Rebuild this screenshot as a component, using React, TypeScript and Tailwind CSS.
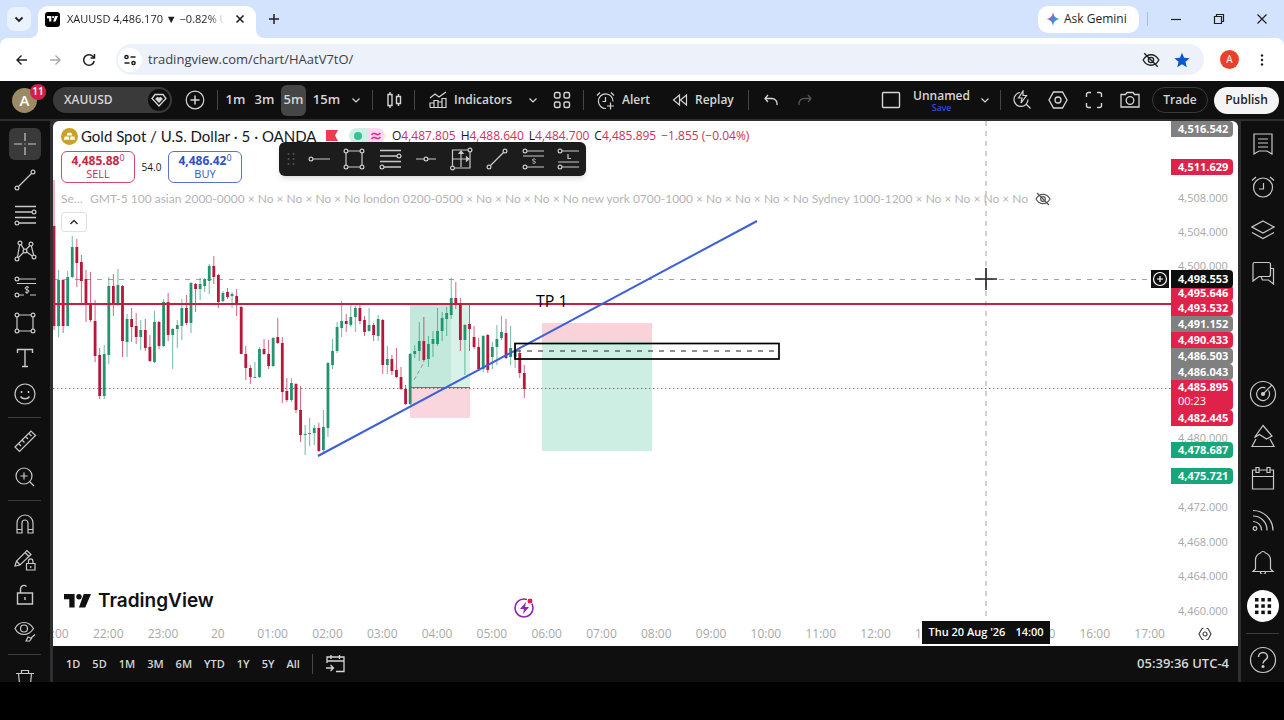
import type { ReactNode } from 'react'

// [high, body top, body bottom, low, 1 = up / 0 = down], one entry per 5m bar
const CANDLES = [
  [59, 105, 205, 209, 0], [149, 159, 205, 216, 1], [158, 159, 205, 212, 0], [150, 156, 205, 205, 1],
  [115, 126, 156, 157, 1], [118, 126, 142, 166, 0], [134, 141, 160, 184, 0], [149, 158, 183, 201, 0],
  [151, 183, 199, 201, 0], [179, 200, 235, 241, 0], [227, 234, 275, 278, 0], [224, 233, 275, 278, 1],
  [156, 165, 234, 243, 1], [153, 165, 183, 195, 0], [148, 164, 183, 185, 1], [164, 165, 220, 236, 0],
  [193, 198, 221, 236, 1], [187, 198, 206, 221, 0], [192, 205, 216, 223, 0], [199, 209, 216, 229, 1],
  [198, 209, 227, 230, 0], [214, 226, 240, 241, 0], [190, 201, 241, 242, 1], [200, 201, 225, 228, 0],
  [178, 181, 225, 226, 1], [172, 181, 214, 220, 0], [207, 208, 214, 248, 1], [199, 204, 208, 227, 1],
  [178, 187, 205, 219, 1], [174, 187, 202, 204, 0], [161, 162, 202, 212, 1], [162, 163, 168, 191, 0],
  [157, 163, 168, 179, 1], [157, 158, 165, 171, 1], [143, 145, 160, 173, 1], [135, 145, 156, 163, 0],
  [153, 154, 181, 187, 0], [170, 172, 180, 181, 1], [167, 171, 176, 178, 0], [171, 173, 175, 187, 1],
  [168, 175, 184, 195, 0], [185, 186, 233, 233, 0], [225, 233, 247, 259, 0], [244, 247, 256, 263, 0],
  [241, 256, 257, 257, 1], [226, 228, 256, 257, 1], [218, 228, 233, 234, 0], [219, 233, 245, 248, 0],
  [216, 217, 245, 246, 1], [197, 216, 222, 223, 0], [216, 222, 271, 282, 0], [257, 270, 279, 281, 0],
  [257, 262, 279, 281, 1], [262, 263, 289, 292, 0], [265, 289, 314, 321, 0], [304, 313, 314, 334, 1],
  [297, 312, 313, 325, 1], [304, 307, 312, 324, 1], [302, 307, 330, 331, 0], [289, 306, 329, 332, 1],
  [241, 242, 307, 316, 1], [218, 230, 244, 248, 1], [201, 206, 230, 232, 1], [180, 200, 207, 216, 1],
  [193, 200, 203, 211, 0], [184, 196, 204, 206, 1], [185, 187, 196, 211, 1], [184, 187, 200, 203, 0],
  [195, 199, 211, 215, 0], [187, 204, 210, 211, 1], [202, 204, 214, 220, 0], [194, 198, 215, 220, 1],
  [198, 199, 244, 253, 0], [225, 238, 244, 253, 1], [234, 238, 250, 254, 0], [227, 249, 256, 257, 0],
  [246, 256, 268, 269, 0], [264, 268, 283, 284, 0], [232, 233, 283, 284, 1], [224, 230, 233, 237, 1],
  [201, 220, 230, 240, 1], [196, 220, 239, 241, 0], [215, 223, 238, 246, 1], [210, 218, 223, 236, 1],
  [187, 210, 223, 225, 1], [191, 197, 210, 220, 1], [186, 192, 198, 215, 1], [157, 177, 194, 198, 1],
  [161, 177, 183, 188, 0], [177, 183, 219, 230, 0], [203, 204, 219, 254, 1], [183, 203, 208, 230, 0],
  [205, 216, 226, 228, 0], [217, 226, 248, 250, 0], [214, 215, 248, 251, 1], [213, 214, 249, 252, 0],
  [221, 226, 236, 248, 1], [204, 218, 226, 244, 1], [195, 211, 217, 219, 1], [198, 212, 237, 238, 0],
  [205, 227, 236, 244, 1], [223, 229, 236, 247, 1], [226, 232, 252, 257, 0], [244, 252, 268, 277, 0],
]
const BAR_STEP = 4.566

const TICKS = [
  { price: '4,508.000', y: 77 },
  { price: '4,504.000', y: 111 },
  { price: '4,500.000', y: 145 },
  { price: '4,480.000', y: 317 },
  { price: '4,472.000', y: 386 },
  { price: '4,468.000', y: 421 },
  { price: '4,464.000', y: 455 },
  { price: '4,460.000', y: 490 },
]

const TAGS = [
  { price: '4,516.542', y: 8, cls: 'bg-[#808080]' },
  { price: '4,511.629', y: 46, cls: 'bg-[#e0224a]' },
  { price: '4,495.646', y: 172, cls: 'bg-[#e0224a]' },
  { price: '4,493.532', y: 187, cls: 'bg-[#e0224a]' },
  { price: '4,491.152', y: 203, cls: 'bg-[#808080]' },
  { price: '4,490.433', y: 219, cls: 'bg-[#e0224a]' },
  { price: '4,486.503', y: 235, cls: 'bg-[#808080]' },
  { price: '4,486.043', y: 251, cls: 'bg-[#808080]' },
  { price: '4,482.445', y: 297, cls: 'bg-[#e0224a]' },
  { price: '4,478.687', y: 329, cls: 'bg-[#17a67a]' },
  { price: '4,475.721', y: 355, cls: 'bg-[#17a67a]' },
  { price: '4,498.553', y: 158, cls: 'bg-[#0c0f0e] h-[18px]' },
]

const HOURS = [
  '21:00', '22:00', '23:00', '20', '01:00', '02:00', '03:00', '04:00', '05:00', '06:00', '07:00',
  '08:00', '09:00', '10:00', '11:00', '12:00', '13:00', '14:00', '15:00', '16:00', '17:00',
]

const NO = ' × No × No × No × No '
const SESSIONS = `GMT-5 100 asian 2000-0000${NO}london 0200-0500${NO}new york 0700-1000${NO}Sydney 1000-1200${NO}Ham`

interface IconProps {
  children: ReactNode
  className?: string
  box?: number
  sw?: number
}

function Icon({ children, className = 'size-6', box = 24, sw = 1.2 }: IconProps) {
  return (
    <svg
      className={`shrink-0 ${className}`}
      viewBox={`0 0 ${box} ${box}`}
      fill="none"
      stroke="currentColor"
      strokeWidth={sw}
      aria-hidden="true"
    >
      {children}
    </svg>
  )
}

const Dot = ({ x, y }: { x: number; y: number }) => <circle cx={x} cy={y} r="1.9" />

const Chevron = () => (
  <Icon className="size-3" box={12} sw={1.2}>
    <path d="M2.500 4.500L6 8l3.500-3.500" />
  </Icon>
)

const TrendIcon = () => (
  <Icon>
    <Dot x={4} y={20} />
    <Dot x={20} y={4} />
    <path d="M5.500 18.500l13-13" />
  </Icon>
)

const RectIcon = () => (
  <Icon>
    <Dot x={4} y={4} />
    <Dot x={20} y={4} />
    <Dot x={4} y={20} />
    <Dot x={20} y={20} />
    <path d="M6 4h12M6 20h12M4 6v12M20 6v12" />
  </Icon>
)

const FibIcon = () => (
  <Icon>
    <path d="M2 3.500h21M2 9h17M2 14.500h21M6 20h17" strokeWidth="1.500" />
    <Dot x={21} y={9} />
    <Dot x={4} y={20} />
  </Icon>
)

const PositionIcon = () => (
  <Icon>
    <Dot x={4} y={4} />
    <Dot x={4} y={20} />
    <path d="M6 4h17M4 8.500h19M6 20h5M17 20h6" />
    <path d="M16 12.500c-1-1-4-1-4 .7 0 1.800 4 1 4 2.900 0 1.700-3 1.800-4 .7M14 11v8" strokeWidth="1" />
  </Icon>
)

const LEFT_TOOLS = [
  {
    name: 'Cross',
    icon: (
      <Icon>
        <path d="M12 1v8M12 15v8M1 12h8M15 12h8M11.500 12h1" />
      </Icon>
    ),
  },
  { name: 'Trend line', icon: <TrendIcon /> },
  { name: 'Fib retracement', icon: <FibIcon /> },
  {
    name: 'Pattern',
    icon: (
      <Icon>
        <Dot x={4} y={20} />
        <Dot x={7} y={4} />
        <Dot x={12} y={12} />
        <Dot x={18} y={5} />
        <Dot x={21} y={18} />
        <path d="M4.500 18L6.600 6M8 5.700l3 4.600M13.200 10.500L16.800 6.500M18.400 7l2.200 9M5.500 18.500l5-5M13.700 13l5.600 4" />
      </Icon>
    ),
  },
  { name: 'Position', icon: <PositionIcon /> },
  { name: 'Rectangle', icon: <RectIcon /> },
  {
    name: 'Text',
    icon: (
      <Icon sw={1.4}>
        <path d="M4.500 7V3.500h15V7M12 3.500v17M9 20.500h6" />
      </Icon>
    ),
  },
  {
    name: 'Emoji',
    icon: (
      <Icon>
        <circle cx="12" cy="12" r="10" />
        <path d="M7.500 14.500c2 3 7 3 9 0M8.500 9v2M15.500 9v2" strokeWidth="1.500" />
      </Icon>
    ),
  },
]

const MEASURE_TOOLS = [
  {
    name: 'Measure',
    icon: (
      <Icon>
        <path d="M2 18L18 2l4.500 4.500-16 16zM5.500 14.500l2.500 2.500M9 11l2.500 2.500M12.500 7.500L15 10M16 4.500L18.500 7" />
      </Icon>
    ),
  },
  {
    name: 'Zoom in',
    icon: (
      <Icon>
        <circle cx="11" cy="11" r="8" />
        <path d="M11 7.500v7M7.500 11h7M17 17l4 4" />
      </Icon>
    ),
  },
]

const STATE_TOOLS = [
  {
    name: 'Magnet',
    icon: (
      <Icon>
        <path d="M4 21V11a8 8 0 0116 0v10h-5V11a3 3 0 00-6 0v10zM4 17.500h5M15 17.500h5" />
      </Icon>
    ),
  },
  {
    name: 'Keep drawing',
    icon: (
      <Icon>
        <path d="M2 18l1.500-5L14 2.500l4 4L7 17zM3.500 13L7 17M12 4.500l4 4" />
        <path d="M13.500 15.500h8.500V22h-8.500zM15.500 15.500V13a2.200 2.200 0 014.400 0v2.500M17.700 18v2" />
      </Icon>
    ),
  },
  {
    name: 'Lock',
    icon: (
      <Icon>
        <path d="M4.500 10h15v11h-15zM7.500 10V6a3.500 3.500 0 016-2.500M12 14v3" strokeWidth="1.400" />
      </Icon>
    ),
  },
  {
    name: 'Hide',
    icon: (
      <Icon>
        <path d="M2 9.500C4 5.500 7 3.500 11 3.500s7 2 9.500 6c-2.500 4-5.500 6-9.500 6s-7-2-9-6z" />
        <circle cx="11" cy="9.500" r="3.500" />
        <path d="M13 22l2-4 3.500 1.500L16.500 22zM18 19l4-3.500" />
      </Icon>
    ),
  },
]

const SIDE_TOP = [
  {
    name: 'Watchlist',
    icon: (
      <Icon>
        <path d="M3 2h18v20l-5-3h-8l-5 3zM7 7h10M7 11h10M7 15h10" />
      </Icon>
    ),
  },
  {
    name: 'Alerts',
    icon: (
      <Icon>
        <circle cx="12" cy="12.500" r="9.500" />
        <path d="M12.500 8v6H8M1 5.500L5 2M23 5.500L19 2" />
      </Icon>
    ),
  },
  {
    name: 'Object tree',
    icon: (
      <Icon>
        <path d="M12 3l11 6-11 6L1 9zM1 14.500l11 6 11-6" />
      </Icon>
    ),
  },
  {
    name: 'Chats',
    icon: (
      <Icon>
        <path d="M3.500 1.500h14a2 2 0 012 2v10a2 2 0 01-2 2H8L2 20V3a1.500 1.500 0 011.500-1.500z" />
        <path d="M19.500 7.500h3V23l-5-4h-6l-1.500-3" />
      </Icon>
    ),
  },
]

const SIDE_BOTTOM = [
  {
    name: 'Screeners',
    icon: (
      <Icon className="size-7" box={28}>
        <circle cx="14" cy="14" r="12.500" />
        <path d="M19.500 10.500a6.500 6.500 0 11-3-2.500M14 14l9-9" />
        <circle cx="14" cy="14" r="1.500" fill="currentColor" />
      </Icon>
    ),
  },
  {
    name: 'Pine',
    icon: (
      <Icon>
        <path d="M12 1.500l9 10.500-5.500 3-7-4.500-5 3zM5 15l-4 7.500h22L19 15" />
      </Icon>
    ),
  },
  {
    name: 'Calendar',
    icon: (
      <Icon>
        <path d="M5 4H1.500v19h21V4H19M8 4h8M1.500 10.500h21M5 1.500h3v5H5zM16 1.500h3v5h-3z" />
      </Icon>
    ),
  },
  {
    name: 'News',
    icon: (
      <Icon>
        <circle cx="4" cy="20.500" r="1.800" />
        <path d="M2 13.500a8.500 8.500 0 018.500 9M2 8a14 14 0 0114 14.500M2 2.500A20 20 0 0122 22.500" />
      </Icon>
    ),
  },
  {
    name: 'Notifications',
    icon: (
      <Icon>
        <path d="M4.500 19V10c0-4 2.500-6 5-7 1-2 4-2 5 0 2.500 1 5 3 5 7v9l2.500 2.500H2zM9.500 22a2.500 2.500 0 005 0" />
      </Icon>
    ),
  },
]

const FAVORITES = [
  {
    name: 'Horizontal ray',
    icon: (
      <Icon>
        <Dot x={4} y={12} />
        <path d="M6 12h17" />
      </Icon>
    ),
  },
  { name: 'Rectangle', icon: <RectIcon /> },
  { name: 'Fib retracement', icon: <FibIcon /> },
  {
    name: 'Horizontal line',
    icon: (
      <Icon>
        <Dot x={12} y={12} />
        <path d="M2 12h8M14 12h8" />
      </Icon>
    ),
  },
  {
    name: 'Date and price range',
    icon: (
      <Icon>
        <path d="M3.500 19V3H19M21 5v16H5.500M12 4v16M4 12h15" />
        <path d="M10 6.500L12 4l2 2.500zM17.500 10l2.500 2-2.500 2z" fill="currentColor" />
        <Dot x={3.5} y={21} />
        <Dot x={21} y={3} />
      </Icon>
    ),
  },
  { name: 'Trend line', icon: <TrendIcon /> },
  {
    name: 'Short position',
    icon: (
      <Icon>
        <Dot x={4} y={4} />
        <Dot x={4} y={20} />
        <path d="M6 4h17M2 9h21M6 20h17" />
        <path d="M14.500 12.500c-1-1-3-.7-3 .6s3 .8 3 2.100-2 1.500-3 .6" strokeWidth="1" />
      </Icon>
    ),
  },
  {
    name: 'Long position',
    icon: (
      <Icon>
        <Dot x={4} y={4} />
        <Dot x={4} y={20} />
        <path d="M6 4h17M2 15h21M6 20h17" />
        <path d="M12 7v4.500h3" />
      </Icon>
    ),
  },
]

const EyeOff = ({ className }: { className?: string }) => (
  <Icon className={className} sw={1.8}>
    <path d="M1.500 12C4 7.500 7.500 5 12 5s8 2.500 10.500 7C20 16.500 16.500 19 12 19s-8-2.500-10.500-7z" />
    <circle cx="12" cy="12" r="3.500" />
    <path d="M3 3l18 18" />
  </Icon>
)

// TradingView mark: two solid shapes and a dot
const Mark = ({ className }: { className: string }) => (
  <svg className={className} viewBox="0 0 28 14" fill="currentColor" aria-hidden="true">
    <path d="M0 0h11v14H5.500V5.500H0zM20.500 0H28l-6 14h-6.500z" />
    <circle cx="15.500" cy="2.800" r="2.800" />
  </svg>
)

const Sep = () => <span className="h-5 w-px shrink-0 bg-[#454545]" />

function BrowserTabs() {
  return (
    <header className="flex h-[38px] shrink-0 items-center bg-[#d3e3fd] text-[#1f1f1f]">
      <button className="ml-[7px] flex size-6 items-center justify-center rounded-lg bg-[#e9f2fe]" aria-label="Search tabs">
        <Icon className="size-3" box={12} sw={1.8}>
          <path d="M2.500 4.500L6 8l3.500-3.500" />
        </Icon>
      </button>
      <div className="relative ml-[7px] mt-[6px] flex h-8 w-[218px] items-center rounded-t-[10px] bg-white pl-[7px]">
        <svg className="absolute -left-2 bottom-0 size-2 text-white" viewBox="0 0 8 8" fill="currentColor" aria-hidden="true">
          <path d="M8 0v8H0a8 8 0 008-8z" />
        </svg>
        <svg className="absolute -right-2 bottom-0 size-2 text-white" viewBox="0 0 8 8" fill="currentColor" aria-hidden="true">
          <path d="M0 0v8h8a8 8 0 01-8-8z" />
        </svg>
        <span className="mb-1.5 flex size-[15px] shrink-0 items-center justify-center rounded-[3px] bg-black text-white">
          <Mark className="w-[11px]" />
        </span>
        <span className="mb-1.5 ml-[7px] w-[158px] overflow-hidden whitespace-nowrap bg-gradient-to-r from-[#1f1f1f] from-90% to-transparent bg-clip-text text-[11px] leading-4 text-transparent">
          XAUUSD 4,486.170 ▼ −0.82% U
        </span>
        <button className="mb-1.5 ml-[9px]" aria-label="Close tab">
          <Icon className="size-3" box={12} sw={1.6}>
            <path d="M2.500 2.500l7 7M9.500 2.500l-7 7" />
          </Icon>
        </button>
      </div>
      <button className="ml-3 flex size-3 items-center" aria-label="New tab">
        <Icon className="size-3" box={12} sw={1.5}>
          <path d="M6 1v10M1 6h10" />
        </Icon>
      </button>
      <button className="ml-auto flex h-[27px] w-[101px] items-center gap-1 rounded-[10px] bg-white pl-2 text-[12px] font-medium">
        <svg className="size-3.5" viewBox="0 0 14 14" aria-hidden="true">
          <defs>
            <linearGradient id="gem" x1="0" y1="0" x2="1" y2="1">
              <stop offset="0.250" stopColor="#e2515b" />
              <stop offset="0.500" stopColor="#4285f4" />
              <stop offset="0.800" stopColor="#34a887" />
            </linearGradient>
          </defs>
          <path d="M7 0c.8 4.500 2.500 6.200 7 7-4.500.8-6.200 2.500-7 7-.8-4.500-2.500-6.200-7-7 4.500-.8 6.200-2.500 7-7z" fill="url(#gem)" />
        </svg>
        Ask Gemini
      </button>
      <span className="ml-2 h-3.5 w-px bg-[#a9bcd9]" />
      <button className="ml-1.5 flex h-8 w-[43px] items-center justify-center" aria-label="Minimize">
        <Icon className="size-3" box={12}>
          <path d="M1 6.500h10" />
        </Icon>
      </button>
      <button className="flex h-8 w-[43px] items-center justify-center" aria-label="Restore">
        <Icon className="size-3" box={12}>
          <path d="M1.500 3.500h7v7h-7zM3.500 3.500v-2h7v7h-2" />
        </Icon>
      </button>
      <button className="mr-px flex h-8 w-[43px] items-center justify-center" aria-label="Close window">
        <Icon className="size-3" box={12}>
          <path d="M1.500 1.500l9 9M10.500 1.500l-9 9" />
        </Icon>
      </button>
    </header>
  )
}

function AddressBar() {
  return (
    <div className="shrink-0 bg-[#d3e3fd]">
      <div className="flex h-[43px] items-center rounded-t-lg bg-white text-[#1f1f1f]">
        <button className="ml-[15px]" aria-label="Back">
          <Icon className="size-3.5" box={14} sw={1.4}>
            <path d="M12 7H2M6.500 2.500L2 7l4.500 4.500" />
          </Icon>
        </button>
        <button className="ml-[19px] text-[#a8a8a8]" aria-label="Forward">
          <Icon className="size-3.5" box={14} sw={1.3}>
            <path d="M2 7h10M7.500 2.500L12 7l-4.500 4.500" />
          </Icon>
        </button>
        <button className="ml-5" aria-label="Reload">
          <Icon className="size-3.5" box={14} sw={1.5}>
            <path d="M12.200 8a5.300 5.300 0 11-1.400-4.700L12.500 5M12.500 1v4h-4" />
          </Icon>
        </button>
        <div className="ml-5 flex h-[31px] flex-1 items-center rounded-full bg-[#edf2fa] pl-0.5">
          <span className="flex size-6 items-center justify-center rounded-full bg-white">
            <Icon className="size-3.5" box={14} sw={1.5}>
              <circle cx="3.500" cy="4" r="1.600" />
              <path d="M7.500 4h5M1.500 10h5" />
              <circle cx="10.500" cy="10" r="1.600" />
            </Icon>
          </span>
          <input
            className="ml-1.5 min-w-0 flex-1 bg-transparent text-[13px] text-[#3c4043] outline-none"
            aria-label="Address"
            defaultValue="tradingview.com/chart/HAatV7tO/"
          />
          <button className="mr-3.5" aria-label="Tracking blocked">
            <EyeOff className="size-[18px]" />
          </button>
          <button className="mr-3.5 text-[#0b57d0]" aria-label="Bookmark">
            <svg className="size-4" viewBox="0 0 24 24" fill="currentColor" aria-hidden="true">
              <path d="M12 1l3.200 7.600 8.300.7-6.300 5.400 1.900 8.100L12 18.500l-7.100 4.300 1.900-8.100L.5 9.300l8.300-.7z" />
            </svg>
          </button>
        </div>
        <button className="ml-4 flex size-[19px] items-center justify-center rounded-full bg-[#e8412a] text-[10px] text-white">A</button>
        <button className="ml-[17px] mr-4" aria-label="Menu">
          <svg className="h-3.5 w-3" viewBox="0 0 12 14" fill="currentColor" aria-hidden="true">
            <circle cx="6" cy="2.500" r="1.200" />
            <circle cx="6" cy="7" r="1.200" />
            <circle cx="6" cy="11.500" r="1.200" />
          </svg>
        </button>
      </div>
    </div>
  )
}

function TopBar() {
  const intervalCls = 'flex h-[31px] items-center justify-center rounded-md text-[13px]'
  return (
    <nav className="flex h-[38px] shrink-0 items-center bg-[#0f0f0f] text-[12px] font-semibold text-[#d6d6d6]">
      <button className="relative ml-3 flex size-[25px] shrink-0 items-center justify-center rounded-full bg-[#9c8a66] text-[15px] text-white">
        A
        <span className="absolute -right-[9px] -top-1 flex size-4 items-center justify-center rounded-full bg-[#d0214b] text-[10px]">
          11
        </span>
      </button>
      <button className="ml-4 flex h-[26px] w-[119px] shrink-0 items-center justify-between rounded-full bg-[#3a3a3a] pl-[11px] pr-0.5">
        XAUUSD
        <span className="flex size-[22px] items-center justify-center rounded-full bg-[#0f0f0f]">
          <Icon className="size-4" box={16} sw={1.3}>
            <path d="M4 2.500h8l3 4-7 7.500-7-7.500z" />
            <path d="M8 10L5 7l1.500-1.500L8 6.500l1.500-1L11 7z" fill="currentColor" />
          </Icon>
        </span>
      </button>
      <button className="flex w-[45px] justify-center" aria-label="Compare">
        <Icon className="size-5" box={20}>
          <circle cx="10" cy="10" r="8.800" />
          <path d="M10 5.500v9M5.500 10h9" strokeWidth="1.500" />
        </Icon>
      </button>
      <Sep />
      <button className={`ml-[3px] w-[29px] ${intervalCls}`}>1m</button>
      <button className={`w-[29px] ${intervalCls}`}>3m</button>
      <button className={`ml-0.5 w-[25px] bg-[#464646] ${intervalCls}`}>5m</button>
      <button className={`ml-1 w-[33px] ${intervalCls}`}>15m</button>
      <button className="flex w-[25px] justify-center" aria-label="Intervals">
        <Chevron />
      </button>
      <span className="w-1" />
      <Sep />
      <button className="flex w-[41px] justify-center" aria-label="Candles">
        <Icon className="size-[18px]" box={18} sw={1.4}>
          <path d="M3 3.500h4v11H3zM5 1v2.500M5 14.500V17M11.500 5.500h4v7h-4zM13.500 3v2.500M13.500 12.500V15" />
        </Icon>
      </button>
      <Sep />
      <button className="ml-3.5 flex w-[92px] items-center gap-[7px]">
        <Icon className="size-[18px]" box={18}>
          <path d="M1 7l5-4 4 3 7-5M1 16.500V12h4v4.500M5 12V9.500h4v7M9 11h4v5.500M13 11V7.500h4v9H1" />
        </Icon>
        Indicators
      </button>
      <button className="flex w-6 justify-center" aria-label="Favorite indicators">
        <Chevron />
      </button>
      <button className="ml-2 flex w-[18px]" aria-label="Templates">
        <Icon className="size-[18px]" box={18} sw={1.4}>
          <rect x="1.500" y="1.500" width="5.500" height="5.500" rx="1.500" />
          <rect x="11" y="1.500" width="5.500" height="5.500" rx="1.500" />
          <rect x="1.500" y="11" width="5.500" height="5.500" rx="1.500" />
          <rect x="11" y="11" width="5.500" height="5.500" rx="1.500" />
        </Icon>
      </button>
      <span className="w-3" />
      <Sep />
      <button className="ml-3 flex w-[76px] items-center gap-[7px]">
        <Icon className="size-[19px]" box={19}>
          <path d="M10 17.500a7.300 7.300 0 117-7M9.500 6v4.500H6.500M1 4.500L4 1.500M18 4.500L15 1.500M14.500 11.500v7M11 15h7" />
        </Icon>
        Alert
      </button>
      <button className="flex w-[76px] items-center gap-[7px]">
        <Icon className="size-4" box={16}>
          <path d="M7.500 3v10L1.500 8zM14.500 3v10l-6-5z" />
        </Icon>
        Replay
      </button>
      <Sep />
      <button className="ml-3.5" aria-label="Undo">
        <Icon className="size-4" box={16} sw={1.3}>
          <path d="M5 3L2 6.500 5 10M2 6.500h7a5 5 0 015 5V13" />
        </Icon>
      </button>
      <button className="ml-[18px] text-[#555]" aria-label="Redo">
        <Icon className="size-4" box={16} sw={1.3}>
          <path d="M11 3l3 3.500-3 3.500M14 6.500H7a5 5 0 00-5 5V13" />
        </Icon>
      </button>

      <button className="ml-auto mr-3" aria-label="Layout setup">
        <Icon className="size-5" box={20} sw={1.4}>
          <rect x="1.500" y="2.500" width="17" height="15" rx="1" />
        </Icon>
      </button>
      <button className="flex w-[57px] flex-col items-center">
        <span className="leading-[14px]">Unnamed</span>
        <span className="text-[9px] font-normal leading-[9px] text-[#3d5afe]">Save</span>
      </button>
      <button className="flex w-[30px] justify-center" aria-label="Layouts">
        <Chevron />
      </button>
      <Sep />
      <button className="flex w-[39px] justify-center pl-0.5" aria-label="Quick search">
        <Icon className="size-5" box={20}>
          <path d="M8 2.500A7 7 0 1016 9.500M14.500 14.500l4 4M11 1L6.500 8H10l-1 5 5.500-7.500H11z" />
        </Icon>
      </button>
      <button className="flex w-9 justify-center" aria-label="Settings">
        <Icon className="size-5" box={20} sw={1.3}>
          <path d="M5.500 2h9L19 10l-4.500 8h-9L1 10z" />
          <circle cx="10" cy="10" r="3" />
        </Icon>
      </button>
      <button className="flex w-9 justify-center" aria-label="Fullscreen">
        <Icon className="size-5" box={20} sw={1.4}>
          <path d="M2.500 7V4.500a2 2 0 012-2H7M13 2.500h2.500a2 2 0 012 2V7M17.500 13v2.500a2 2 0 01-2 2H13M7 17.500H4.500a2 2 0 01-2-2V13" />
        </Icon>
      </button>
      <button className="flex w-9 justify-center" aria-label="Snapshot">
        <Icon className="size-5" box={20} sw={1.3}>
          <path d="M1 4.500h4.500L7 2.500h6l1.500 2H19V17H1z" />
          <circle cx="10" cy="10.500" r="3.800" />
        </Icon>
      </button>
      <button className="ml-1 flex h-[26px] w-[56px] items-center justify-center rounded-full border border-[#3a3a3a]">Trade</button>
      <button className="ml-1.5 mr-[5px] flex h-[27px] w-[65px] items-center justify-center rounded-full bg-[#f4f4f4] text-[#1b1b1b]">
        Publish
      </button>
    </nav>
  )
}

function LeftToolbar() {
  return (
    <aside className="flex w-[50px] shrink-0 flex-col overflow-hidden bg-[#0f0f0f] pr-px pt-[5px] text-[#c9c9c9]">
      <div className="flex h-[286px] shrink-0 flex-col">
        {LEFT_TOOLS.map((t, i) => (
          <button key={t.name} className="flex flex-1 items-center justify-center" aria-label={t.name}>
            <span className={i === 0 ? 'flex size-8 items-center justify-center rounded-md bg-[#3a3a3a]' : ''}>{t.icon}</span>
          </button>
        ))}
      </div>
      <hr className="mx-2 my-[5px] shrink-0 border-[#3a3a3a]" />
      <div className="flex h-[72px] shrink-0 flex-col">
        {MEASURE_TOOLS.map((t) => (
          <button key={t.name} className="flex flex-1 items-center justify-center" aria-label={t.name}>
            {t.icon}
          </button>
        ))}
      </div>
      <hr className="mx-2 my-[5px] shrink-0 border-[#3a3a3a]" />
      <div className="flex h-[143px] shrink-0 flex-col">
        {STATE_TOOLS.map((t) => (
          <button key={t.name} className="flex flex-1 items-center justify-center" aria-label={t.name}>
            {t.icon}
          </button>
        ))}
      </div>
      <hr className="mx-2 my-[5px] shrink-0 border-[#3a3a3a]" />
      <button className="flex shrink-0 justify-center pt-2" aria-label="Remove">
        <Icon>
          <path d="M3 5.500h18M8.500 5.500V2.500h7v3M5.500 5.500L7 21h10l1.500-15.500" />
        </Icon>
      </button>
    </aside>
  )
}

function RightSidebar() {
  return (
    <aside className="flex w-[43px] shrink-0 flex-col overflow-hidden bg-[#0f0f0f] pt-px text-[#c9c9c9]">
      {SIDE_TOP.map((t) => (
        <button key={t.name} className="flex h-[43px] shrink-0 items-center justify-center" aria-label={t.name}>
          {t.icon}
        </button>
      ))}
      <div className="mt-auto flex flex-col">
        {SIDE_BOTTOM.map((t) => (
          <button key={t.name} className="flex h-[42px] items-center justify-center" aria-label={t.name}>
            {t.icon}
          </button>
        ))}
        <button className="flex h-[46px] items-center justify-center" aria-label="Products">
          <span className="flex size-8 items-center justify-center rounded-full bg-white text-[#0f0f0f]">
            <svg className="size-[18px]" viewBox="0 0 18 18" fill="currentColor" aria-hidden="true">
              {[0, 1, 2].map((r) => [0, 1, 2].map((c) => <rect key={`${r}${c}`} x={1 + c * 6.3} y={1 + r * 6.3} width="3.500" height="3.500" />))}
            </svg>
          </span>
        </button>
        <hr className="mx-[5px] my-1 border-[#3a3a3a]" />
        <button className="flex h-11 items-center justify-center" aria-label="Help">
          <Icon className="size-7" box={28}>
            <circle cx="14" cy="14" r="12.500" />
            <path d="M9.500 11a4.500 4.500 0 119 0c0 3-4.500 3-4.500 6.500" strokeWidth="1.500" />
            <circle cx="14" cy="20.500" r="1" fill="currentColor" />
          </Icon>
        </button>
      </div>
    </aside>
  )
}

function Drawings() {
  return (
    <svg className="absolute inset-0 size-full" aria-hidden="true">
      <rect x="357" y="184" width="60" height="82" fill="#d7f2e9" />
      <rect x="357" y="184" width="41" height="82" fill="#c3e9dd" />
      <rect x="357" y="267" width="60" height="30" fill="#f9d5dd" />
      <path d="M357 266.500h60" stroke="#7d6f62" />
      <rect x="489" y="202" width="110" height="19" fill="#f9d2da" />
      <rect x="489" y="221" width="110" height="109" fill="#cdeee3" />
      <path d="M0 158.500h2000" stroke="#a3a3a3" strokeDasharray="5 6" />
      <path d="M933 0v2000" stroke="#a3a3a3" strokeDasharray="5 5" />
      <path d="M0 267.500h2000" stroke="#8a7478" strokeDasharray="1.500 2.500" />
      <path d="M361 259l9-16" stroke="#8a9a94" strokeDasharray="4 3" />
      {CANDLES.map(([high, top, bottom, low, up], i) => {
        const x = 1 + i * BAR_STEP
        return (
          <g key={i} fill={up ? '#23946d' : '#b8163a'}>
            <rect x={x - 0.5} y={high} width="1" height={low - high} opacity="0.65" />
            <rect x={x - 1.4} y={top} width="2.800" height={bottom - top} />
          </g>
        )
      })}
      <path d="M0 183h2000" stroke="#c4203f" strokeWidth="2" />
      <path d="M265 335L704 100" stroke="#3d5fd9" strokeWidth="2" />
      <rect x="462" y="222.500" width="264" height="15.500" stroke="#000" strokeWidth="1.700" fill="none" />
      <path d="M463 230h262" stroke="#222" strokeWidth="1.200" strokeDasharray="5 6" />
      <path d="M922 158h22M933 147v22" stroke="#222" strokeWidth="1.600" />
      <circle cx="471" cy="487" r="9" fill="#fff" stroke="#8e24aa" strokeWidth="1.600" />
      <path d="M473 481l-6 7h4l-1 5 6-7h-4z" fill="#8e24aa" />
      <circle cx="477" cy="480" r="3" fill="#e0224a" stroke="#fff" />
    </svg>
  )
}

const OHLC = [
  ['O', '4,487.805'],
  ['H', '4,488.640'],
  ['L', '4,484.700'],
  ['C', '4,485.895'],
]

function Legend() {
  return (
    <div className="absolute inset-x-2 top-1.5 flex flex-col items-start">
      <div className="flex h-[18px] items-center whitespace-nowrap text-[#131722]">
        <svg className="size-[17px]" viewBox="0 0 18 18" aria-hidden="true">
          <circle cx="9" cy="9" r="9" fill="#c9a227" />
          <path d="M7 5h4l1 3H6zM4 9h4l1 3.500H3zM10 9h4l1 3.500H9.500z" fill="#fff" />
        </svg>
        <h1 className="ml-[3px] w-[245px] font-['Lato','Open_Sans',sans-serif] text-[15px]">Gold Spot / U.S. Dollar · 5 · OANDA</h1>
        <svg className="h-3 w-3" viewBox="0 0 12 12" aria-hidden="true">
          <path d="M0 0h12L9 5.500l3 5.500H0z" fill="#ef3a4f" />
        </svg>
        <span className="ml-[11px] flex h-4 w-9 overflow-hidden rounded-full">
          <span className="flex flex-1 items-center justify-center bg-[#cff0e5]">
            <span className="size-2 rounded-full bg-[#35c296]" />
          </span>
          <span className="flex flex-1 items-center justify-center bg-[#fbd9ee] text-[#e0359a]">
            <Icon className="size-2.5" box={10} sw={1.6}>
              <path d="M.5 4c1.500-2 3-2 4.500-1s3 1 4.500-1M.5 8c1.500-2 3-2 4.500-1s3 1 4.500-1" />
            </Icon>
          </span>
        </span>
        <p className="ml-[7px] flex gap-[5px] text-[12px]">
          {OHLC.map(([k, v]) => (
            <span key={k}>
              {k}
              <span className="text-[#d0305a]">{v}</span>
            </span>
          ))}
          <span className="text-[#d0305a]">−1.855 (−0.04%)</span>
        </p>
      </div>
      <div className="mt-1.5 flex h-8 items-center text-center text-[12px] leading-[13px]">
        <button className="h-8 w-[74px] rounded-md border border-[#cf4a66] bg-white text-[#c9284a]">
          <b className="block">4,485.88<sup className="text-[9px] font-normal">0</sup></b>
          <span className="block text-[11px]">SELL</span>
        </button>
        <span className="w-[33px] text-[10px] text-[#131722]">54.0</span>
        <button className="h-8 w-[74px] rounded-md border border-[#5a6fd8] bg-white text-[#3350c8]">
          <b className="block">4,486.42<sup className="text-[9px] font-normal">0</sup></b>
          <span className="block text-[11px]">BUY</span>
        </button>
      </div>
      <div className="mt-1.5 flex h-5 items-center whitespace-nowrap font-['Lato','Open_Sans',sans-serif] text-[12px] text-[#b5b5b5]">
        <span className="w-[29px]">Se…</span>
        <span className="w-[940px] overflow-hidden">{SESSIONS}</span>
        <EyeOff className="ml-[5px] size-4 text-[#555]" />
      </div>
      <button className="mt-[3px] flex h-5 w-[26px] items-center justify-center rounded-[3px] border border-[#e0e0e0] bg-white text-[#333]" aria-label="Collapse legend">
        <Icon className="size-2.5" box={10} sw={1.5}>
          <path d="M1.500 7L5 3.500 8.500 7" />
        </Icon>
      </button>
    </div>
  )
}

function PriceAxis() {
  const labelCls = 'absolute -translate-y-1/2 left-0 flex h-4 w-[62px] items-center pl-[7px]'
  return (
    <div className="relative w-[67px] shrink-0 overflow-hidden text-[11px]">
      {TICKS.map((t) => (
        <span key={t.price} className={`${labelCls} text-[#a8a8a8]`} style={{ top: t.y }}>
          {t.price}
        </span>
      ))}
      <span className="absolute left-0 top-[259px] h-[30px] w-[62px] rounded-r-sm bg-[#e0224a] pl-[7px] leading-[14px] text-white">
        <b className="block font-bold">4,485.895</b>
        00:23
      </span>
      {TAGS.map((t) => (
        <span key={t.price} className={`${labelCls} rounded-r-sm font-bold text-white ${t.cls}`} style={{ top: t.y }}>
          {t.price}
        </span>
      ))}
    </div>
  )
}

function Chart() {
  return (
    <main className="relative flex min-h-0 flex-1 flex-col overflow-hidden rounded-t-md bg-white">
      <div className="flex min-h-0 flex-1">
        <div className="relative min-w-0 flex-1 overflow-hidden">
          <Drawings />
          <Legend />
          <span className="absolute left-[483px] top-[170px] text-[16px] leading-5 text-black">TP 1</span>
          <div className="absolute bottom-2 left-[11px] flex items-center gap-[7px] text-[#111]">
            <Mark className="w-[27px]" />
            <span className="font-['Inter','Open_Sans',sans-serif] text-[19px] font-semibold leading-6">TradingView</span>
          </div>
          <button className="absolute right-0.5 top-[149px] flex size-[18px] items-center justify-center bg-[#0f0f0f] text-white" aria-label="Add at price">
            <Icon className="size-4" box={16}>
              <circle cx="8" cy="8" r="6.500" />
              <path d="M8 5v6M5 8h6" />
            </Icon>
          </button>
          <div className="absolute left-[226px] top-[21px] flex h-[34px] w-[307px] items-center rounded-md bg-[#1c1c1c] text-[#c9c9c9] shadow-md">
            <svg className="ml-2 mr-1.5 h-3.5 w-2 shrink-0 text-[#555]" viewBox="0 0 8 14" fill="currentColor" aria-hidden="true">
              {[2, 7, 12].map((y) => (
                <g key={y}>
                  <circle cx="1.500" cy={y} r="1" />
                  <circle cx="6.500" cy={y} r="1" />
                </g>
              ))}
            </svg>
            {FAVORITES.map((t) => (
              <button key={t.name} className="flex flex-1 items-center justify-center" aria-label={t.name}>
                {t.icon}
              </button>
            ))}
          </div>
        </div>
        <PriceAxis />
      </div>
      <div className="flex h-[25px] shrink-0 items-center text-[12px] text-[#a8a8a8]">
        <div className="-ml-[27px] grid flex-1 grid-cols-[repeat(21,minmax(0,1fr))] text-center">
          {HOURS.map((h) => (
            <span key={h}>{h}</span>
          ))}
        </div>
        <button className="flex w-[61px] justify-center pr-1.5 text-[#444]" aria-label="Axis settings">
          <Icon className="size-3.5" box={14}>
            <path d="M4 1.500L1 7l3 5.500M10 1.500L13 7l-3 5.500M4 1.500h1.500M8.500 1.500H10M4 12.500h1.500M8.500 12.500H10" />
            <circle cx="7" cy="7" r="2" />
          </Icon>
        </button>
      </div>
      <span className="absolute bottom-0.5 left-[869px] flex h-[23px] w-[128px] items-center justify-center gap-2.5 whitespace-nowrap bg-[#0f0f0f] text-[11px] font-semibold text-white">
        <span>Thu 20 Aug '26</span>
        <span>14:00</span>
      </span>
    </main>
  )
}

const RANGES = ['1D', '5D', '1M', '3M', '6M', 'YTD', '1Y', '5Y', 'All']

function BottomBar() {
  return (
    <footer className="flex h-9 shrink-0 items-center bg-[#0f0f0f] pl-[13px] pr-[9px] font-semibold text-[#d6d6d6]">
      <div className="flex gap-3 text-[11px]">
        {RANGES.map((r) => (
          <button key={r}>{r}</button>
        ))}
      </div>
      <span className="w-3" />
      <Sep />
      <button className="ml-3" aria-label="Go to date">
        <Icon className="size-5" box={20} sw={1.3}>
          <path d="M2 9V3h17v14.500h-8M2 7h17M6 1v4M14.500 1v4M1 14h7M5.500 11l3 3-3 3" />
        </Icon>
      </button>
      <span className="ml-auto text-[13px]">05:39:36 UTC-4</span>
    </footer>
  )
}

export default function App() {
  return (
    <div className="flex h-screen flex-col overflow-hidden bg-black font-['Open_Sans','Noto_Sans',sans-serif]">
      <BrowserTabs />
      <AddressBar />
      <div className="flex min-h-0 flex-1 flex-col gap-0.5 bg-[#2f2f31]">
        <TopBar />
        <div className="flex min-h-0 flex-1 gap-[3px]">
          <LeftToolbar />
          <div className="flex min-w-0 flex-1 flex-col">
            <Chart />
            <BottomBar />
          </div>
          <RightSidebar />
        </div>
      </div>
      <div className="h-[38px] shrink-0 bg-black" />
    </div>
  )
}
